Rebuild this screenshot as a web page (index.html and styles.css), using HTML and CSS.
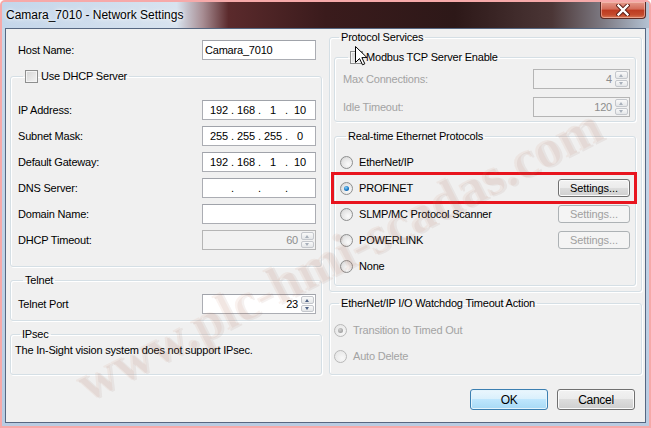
FILE: index.html
```html
<html>
<head>
    <meta charset="utf-8" />
    <link rel="stylesheet" href="styles.css">
</head>
<body>
    <div class="window">
        <div class="titlebar">
            <span class="titlebar__text">Camara_7010 - Network Settings</span>
            <span class="close">
                <svg width="14" height="12" viewBox="0 0 14 12">
                    <path d="M2.5 1.5 L11.5 10.5 M11.5 1.5 L2.5 10.5" stroke="#5a1c14" stroke-width="4.2" stroke-linecap="square" />
                    <path d="M2.5 1.5 L11.5 10.5 M11.5 1.5 L2.5 10.5" stroke="#ffffff" stroke-width="2.4" stroke-linecap="square" />
                </svg>
            </span>
        </div>

        <div class="client">
            <div class="columns">
                <div class="col col--left">
                    <div class="row row--host">
                        <span class="row__label">Host Name:</span>
                        <div class="field field--text">Camara_7010</div>
                    </div>

                    <fieldset class="group group--dhcp">
                        <legend class="group__title"><span class="check"></span>Use DHCP Server</legend>
                        <div class="rows">
                            <div class="row">
                                <span class="row__label">IP Address:</span>
                                <div class="field field--ip">
                                    <span>192</span><span>.</span><span>168</span><span>.</span><span>1</span><span>.</span><span>10</span>
                                </div>
                            </div>
                            <div class="row">
                                <span class="row__label">Subnet Mask:</span>
                                <div class="field field--ip">
                                    <span>255</span><span>.</span><span>255</span><span>.</span><span>255</span><span>.</span><span>0</span>
                                </div>
                            </div>
                            <div class="row">
                                <span class="row__label">Default Gateway:</span>
                                <div class="field field--ip">
                                    <span>192</span><span>.</span><span>168</span><span>.</span><span>1</span><span>.</span><span>10</span>
                                </div>
                            </div>
                            <div class="row">
                                <span class="row__label">DNS Server:</span>
                                <div class="field field--ip">
                                    <span></span><span>.</span><span></span><span>.</span><span></span><span>.</span><span></span>
                                </div>
                            </div>
                            <div class="row">
                                <span class="row__label">Domain Name:</span>
                                <div class="field field--text"></div>
                            </div>
                            <div class="row">
                                <span class="row__label">DHCP Timeout:</span>
                                <div class="field field--spin field--disabled">
                                    <span class="field__value">60</span>
                                    <span class="spin"><span class="spin__btn spin__btn--up"></span><span class="spin__btn spin__btn--down"></span></span>
                                </div>
                            </div>
                        </div>
                    </fieldset>

                    <fieldset class="group group--telnet">
                        <legend class="group__title">Telnet</legend>
                        <div class="row">
                            <span class="row__label">Telnet Port</span>
                            <div class="field field--spin">
                                <span class="field__value">23</span>
                                <span class="spin"><span class="spin__btn spin__btn--up"></span><span class="spin__btn spin__btn--down"></span></span>
                            </div>
                        </div>
                    </fieldset>

                    <fieldset class="group group--ipsec">
                        <legend class="group__title">IPsec</legend>
                        <div class="note">The In-Sight vision system does not support IPsec.</div>
                    </fieldset>
                </div>

                <div class="col col--right">
                    <fieldset class="group group--protocol">
                        <legend class="group__title">Protocol Services</legend>

                        <fieldset class="group group--modbus">
                            <legend class="group__title"><span class="check"></span>Modbus TCP Server Enable</legend>
                            <div class="row">
                                <span class="row__label row__label--disabled">Max Connections:</span>
                                <div class="field field--spin field--disabled field--wide">
                                    <span class="field__value">4</span>
                                    <span class="spin"><span class="spin__btn spin__btn--up"></span><span class="spin__btn spin__btn--down"></span></span>
                                </div>
                            </div>
                            <div class="row">
                                <span class="row__label row__label--disabled">Idle Timeout:</span>
                                <div class="field field--spin field--disabled field--wide">
                                    <span class="field__value">120</span>
                                    <span class="spin"><span class="spin__btn spin__btn--up"></span><span class="spin__btn spin__btn--down"></span></span>
                                </div>
                            </div>
                        </fieldset>

                        <fieldset class="group group--realtime">
                            <legend class="group__title">Real-time Ethernet Protocols</legend>
                            <div class="radios">
                                <div class="option"><span class="radio"></span><span class="option__label">EtherNet/IP</span></div>
                                <div class="option option--marked">
                                    <span class="radio radio--on"></span><span class="option__label">PROFINET</span>
                                    <span class="button button--small">Settings...</span>
                                </div>
                                <div class="option">
                                    <span class="radio"></span><span class="option__label">SLMP/MC Protocol Scanner</span>
                                    <span class="button button--small button--disabled">Settings...</span>
                                </div>
                                <div class="option">
                                    <span class="radio"></span><span class="option__label">POWERLINK</span>
                                    <span class="button button--small button--disabled">Settings...</span>
                                </div>
                                <div class="option"><span class="radio"></span><span class="option__label">None</span></div>
                            </div>
                        </fieldset>
                    </fieldset>

                    <fieldset class="group group--watchdog">
                        <legend class="group__title">EtherNet/IP I/O Watchdog Timeout Action</legend>
                        <div class="radios">
                            <div class="option option--disabled"><span class="radio radio--on"></span><span class="option__label">Transition to Timed Out</span></div>
                            <div class="option option--disabled"><span class="radio"></span><span class="option__label">Auto Delete</span></div>
                        </div>
                    </fieldset>
                </div>
            </div>

            <div class="actions">
                <span class="button button--default">OK</span>
                <span class="button">Cancel</span>
            </div>
        </div>

        <div class="watermark">www.plc-hmi-scadas.com</div>

        <svg class="cursor" width="13" height="20" viewBox="0 0 13 20">
            <path d="M0.5 0.5 L0.5 16.5 L4.5 12.5 L7.5 18.8 L9.8 17.8 L6.9 11.6 L12 11.6 Z" fill="#ffffff" stroke="#000000" stroke-width="1" stroke-linejoin="miter" />
        </svg>
    </div>
</body>
</html>
```

FILE: styles.css
```css
body {
    margin: 0;
    padding: 0;
    background: #ffffff;
    font-family: "Liberation Sans", Arial, sans-serif;
    font-size: 11px;
    letter-spacing: -0.2px;
    color: #000;
}

.window {
    position: relative;
    box-sizing: border-box;
    width: 651px;
    height: 428px;
    border: 2px solid #f6a9a9;
    border-radius: 5px 5px 0 0;
    background: linear-gradient(#c9d9ea, #b9cce2);
    padding: 0 3px 3px;
    overflow: hidden;
}

.titlebar {
    display: flex;
    justify-content: space-between;
    align-items: flex-start;
    height: 26px;
    margin: 0 -3px;
    padding: 0 3px;
    background: linear-gradient(90deg, #c4d6ea 0, #d8e3ef 27%, #a88e94 31%, #5b2a2c 35%, #3a1b1c 50%, #2d1818 70%, #4b3636 85%, #7e7b84 93%, #b3c2d3 100%);
}
.titlebar__text {
    padding: 6px 0 0 1px;
    font-size: 12px;
    letter-spacing: 0;
    color: #000;
    text-shadow: 0 0 6px #fff, 0 0 3px #fff;
}
.close {
    display: flex;
    align-items: center;
    justify-content: center;
    box-sizing: border-box;
    width: 46px;
    height: 17px;
    border: 1px solid #5c2a24;
    border-top: 0;
    border-radius: 0 0 4px 4px;
    background: linear-gradient(#e49a8c 0, #d36b58 45%, #bd3a20 50%, #c44a2c 80%, #d77a58 100%);
    box-shadow: inset 0 0 0 1px rgba(255, 210, 200, 0.5);
}

.client {
    box-sizing: border-box;
    height: 395px;
    border: 1px solid #566781;
    background: #f0f0f0;
    padding: 0 3px 0 4px;
}

.columns {
    display: flex;
    gap: 7px;
}
.col {
    display: flex;
    flex-direction: column;
}
.col--left {
    width: 312px;
    padding-top: 11px;
}
.col--right {
    width: 313px;
    padding-top: 1px;
}

/* group boxes */
.group {
    margin: 0;
    padding: 0;
    border: 1px solid #d5dfe5;
    border-radius: 3px;
    box-shadow: inset 1px 1px 0 #fff, 1px 1px 0 #fff;
}
.group__title {
    display: flex;
    align-items: center;
    height: 14px;
    margin-left: 5px;
    padding: 0 2px;
    line-height: 14px;
}

.group--dhcp {
    margin-top: 9px;
    padding: 17px 5px 16px 7px;
}
.group--telnet {
    margin-top: 6px;
    padding: 7px 5px 6px 7px;
}
.group--ipsec {
    margin-top: 6px;
    padding: 3px 5px 17px 4px;
}
.group--protocol {
    padding: 6px 5px 5px 4px;
}
.group--modbus {
    padding: 5px 5px 4px 8px;
}
.group--modbus .row + .row {
    margin-top: 8px;
}
.group--realtime {
    margin-top: 7px;
    padding: 9px 5px 9px 5px;
}
.group--realtime .group__title {
    margin-left: 6px;
}
.group--watchdog {
    margin-top: 4px;
    padding: 10px 5px 8px 4px;
}

.note {
    line-height: 13px;
}

/* label + field rows */
.rows {
    display: flex;
    flex-direction: column;
    gap: 6px;
}
.row {
    display: flex;
    align-items: center;
    justify-content: space-between;
    height: 20px;
}
.row--host {
    padding: 0 6px 0 8px;
}
.row__label--disabled {
    color: #a3a3a3;
}

.field {
    box-sizing: border-box;
    width: 114px;
    height: 20px;
    border: 1px solid #abadb3;
    border-top-color: #a0a3aa;
    background: #fff;
    line-height: 18px;
}
.field--text {
    padding-left: 2px;
}
.field--ip {
    display: grid;
    grid-template-columns: 22px 5px 22px 5px 22px 5px 22px;
    padding-left: 5px;
    text-align: center;
}
.field--spin {
    display: flex;
    justify-content: flex-end;
}
.field--wide {
    width: 97px;
}
.field--disabled {
    background: #f2f2f2;
    border-color: #b5b5b5;
    color: #8d8d8d;
}
.field__value {
    padding-right: 3px;
}

.spin {
    display: flex;
    flex-direction: column;
    gap: 1px;
    width: 13px;
    padding: 1px 1px 1px 0;
}
.spin__btn {
    position: relative;
    flex: 1;
    box-sizing: border-box;
    border: 1px solid #c4c7cc;
    border-radius: 2px;
    background: linear-gradient(#f9f9f9, #e4e6e8);
}
.spin__btn:after {
    content: "";
    position: absolute;
    left: 3px;
    top: 2px;
    border-left: 2.5px solid transparent;
    border-right: 2.5px solid transparent;
}
.spin__btn--up:after {
    border-bottom: 3px solid #4d6185;
}
.spin__btn--down:after {
    top: 1px;
    border-top: 3px solid #4d6185;
}
.field--disabled .spin__btn--up:after {
    border-bottom-color: #a8b0bb;
}
.field--disabled .spin__btn--down:after {
    border-top-color: #a8b0bb;
}

/* check boxes and radios */
.check {
    box-sizing: border-box;
    width: 13px;
    height: 13px;
    margin-right: 3px;
    border: 1px solid #8e8f8f;
    background: linear-gradient(135deg, #d5d5d5, #f4f4f4);
    box-shadow: inset 0 0 0 1px #f4f4f4;
}

.radios {
    display: flex;
    flex-direction: column;
    gap: 6px;
}
.option {
    display: flex;
    align-items: center;
    height: 20px;
}
.option__label {
    margin-left: 6px;
    flex: 1;
}
.option--disabled {
    color: #a3a3a3;
}
.radio {
    position: relative;
    box-sizing: border-box;
    width: 13px;
    height: 13px;
    border: 1px solid #8e8f8f;
    border-radius: 50%;
    background: radial-gradient(circle at 65% 65%, #fbfbfb 0, #e4e4e4 60%, #c8c8c8 100%);
}
.radio--on:after {
    content: "";
    position: absolute;
    left: 3px;
    top: 3px;
    width: 5px;
    height: 5px;
    border-radius: 50%;
    background: radial-gradient(circle at 40% 35%, #8ad2f8 0, #1a78c5 55%, #0d4f8f 100%);
}
.option--disabled .radio {
    border-color: #b9b9b9;
    background: radial-gradient(circle at 65% 65%, #f8f8f8, #e2e2e2);
}
.option--disabled .radio--on:after {
    background: radial-gradient(circle at 40% 35%, #d0d0d0, #8e8e8e);
}

.option--marked {
    position: relative;
}
.option--marked:before {
    content: "";
    position: absolute;
    left: -9px;
    top: -6px;
    width: 300px;
    height: 26px;
    border: 3px solid #e8141e;
}

/* push buttons */
.button {
    display: flex;
    align-items: center;
    justify-content: center;
    box-sizing: border-box;
    width: 78px;
    height: 21px;
    border: 1px solid #707070;
    border-radius: 3px;
    background: linear-gradient(#f2f2f2 0, #ebebeb 49%, #dddddd 50%, #cfcfcf 100%);
    box-shadow: inset 0 0 0 1px #fbfbfb;
    font-size: 12px;
    letter-spacing: -0.3px;
}
.button--default {
    border-color: #3c7fb1;
    background: linear-gradient(#eaf6fd 0, #d9f0fc 49%, #bee6fd 50%, #a7d9f5 100%);
    box-shadow: inset 0 0 0 1px #e4f4fc;
}
.button--small {
    width: 72px;
    height: 18px;
    font-size: 11px;
    letter-spacing: -0.1px;
}
.button--disabled {
    border-color: #adb2b5;
    background: #f4f4f4;
    box-shadow: none;
    color: #a0a0a0;
}

.actions {
    display: flex;
    justify-content: flex-end;
    gap: 9px;
    margin-top: 14px;
    padding-right: 7px;
}

/* overlays */
.watermark {
    position: absolute;
    left: 336px;
    top: 252px;
    transform: translate(-50%, -50%) rotate(-27deg);
    font-family: "Liberation Serif", serif;
    font-weight: bold;
    font-size: 54px;
    letter-spacing: 0;
    white-space: nowrap;
    color: rgba(205, 140, 110, 0.1);
    text-shadow: 2px 2px 0 rgba(120, 60, 40, 0.07);
    pointer-events: none;
}
.cursor {
    position: absolute;
    left: 353px;
    top: 44px;
}
```
